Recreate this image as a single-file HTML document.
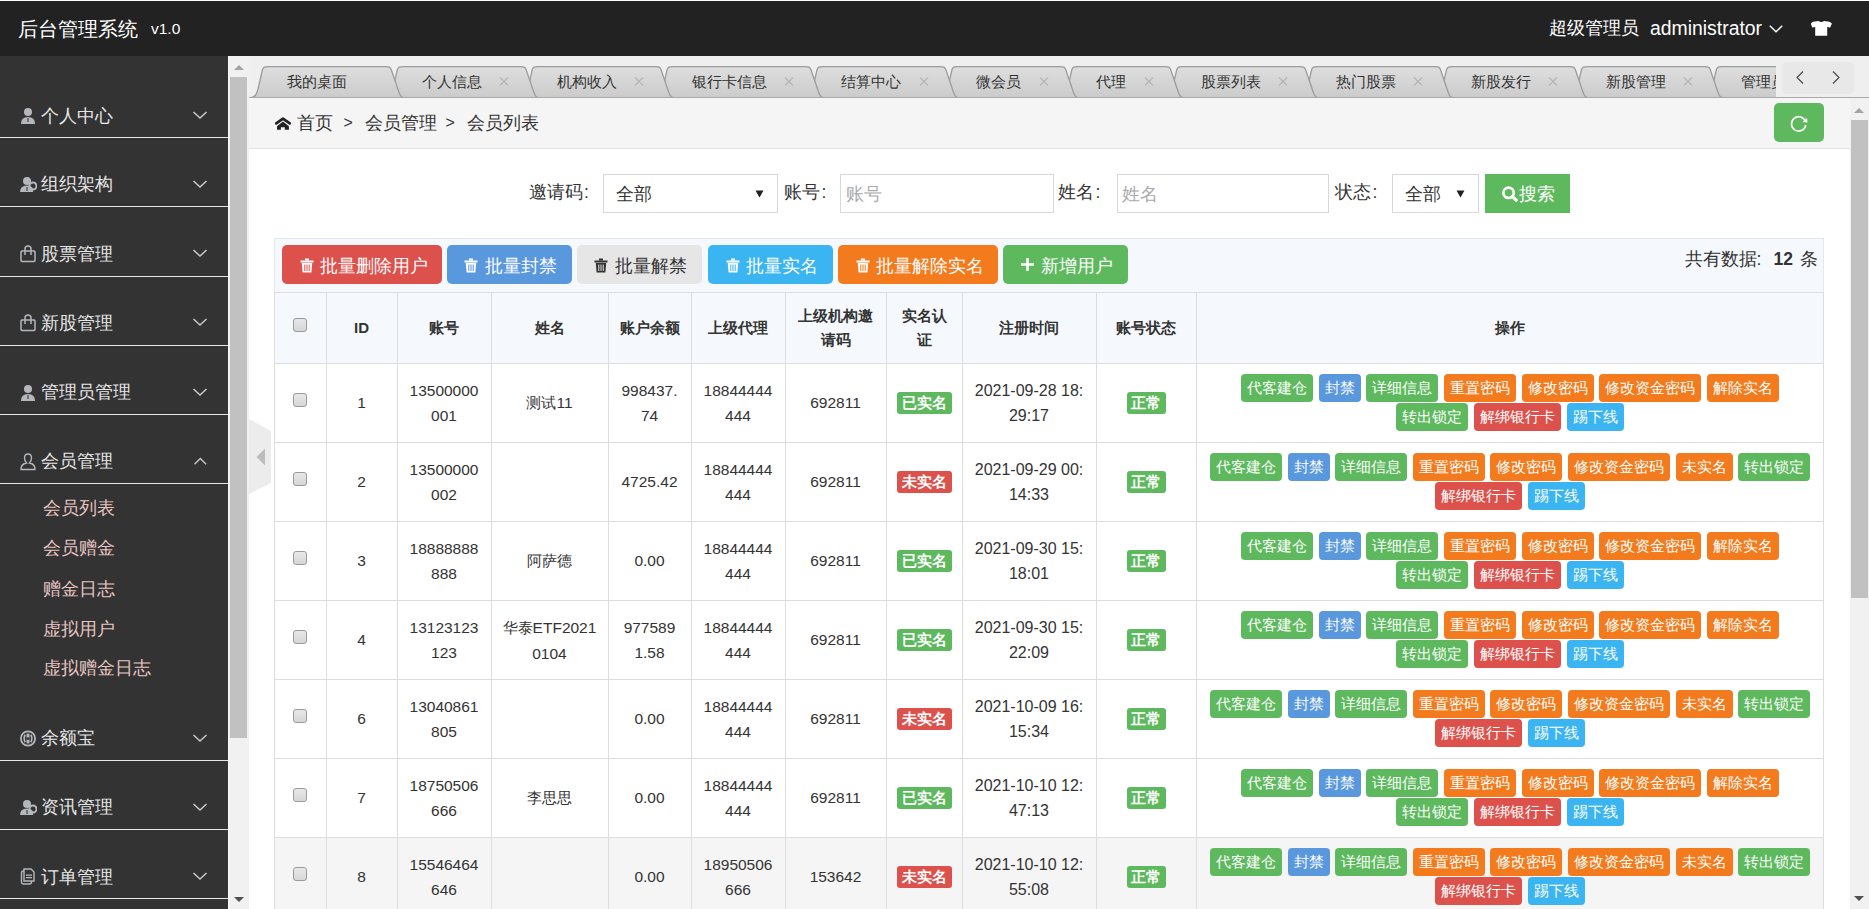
<!DOCTYPE html>
<html><head><meta charset="utf-8"><title>会员列表</title>
<style>
html,body{margin:0;padding:0;width:1869px;height:909px;overflow:hidden;background:#fff;font-family:"Liberation Sans", sans-serif;}
</style></head><body>
<div style="position:absolute;left:0px;top:0px;width:1869px;height:1px;background:#ffffff"></div>
<div style="position:absolute;left:0px;top:1px;width:1869px;height:55px;background:#222"></div>
<div style="position:absolute;left:18px;top:17.00px;font-size:20px;line-height:24px;color:#fff;font-weight:normal;text-align:left;white-space:nowrap;">后台管理系统</div>
<div style="position:absolute;left:151px;top:19.25px;font-size:15.5px;line-height:19.5px;color:#fff;font-weight:normal;text-align:left;white-space:nowrap;">v1.0</div>
<div style="position:absolute;left:1549px;top:17.75px;font-size:17.5px;line-height:21.5px;color:#fff;font-weight:normal;text-align:left;white-space:nowrap;">超级管理员</div>
<div style="position:absolute;left:1650px;top:16.80px;font-size:19.4px;line-height:23.4px;color:#fff;font-weight:normal;text-align:left;white-space:nowrap;">administrator</div>
<svg style="position:absolute;left:1768px;top:23px" width="16" height="12" viewBox="0 0 16 12"><polyline points="1.8,2.8 8,8.8 14.2,2.8" fill="none" stroke="#fff" stroke-width="1.5"/></svg>
<svg style="position:absolute;left:1810px;top:20px" width="23" height="17" viewBox="0 0 23 17"><path d="M8.5,1 L3,1.8 L0.8,3.5 L2.2,7.6 L5.2,7 L5.2,15.8 L17.2,15.8 L17.2,7 L20.2,7.6 L21.9,3.5 L19.5,1.8 L14,1 Q11.3,3.2 8.5,1 Z" fill="#fff"/></svg>
<div style="position:absolute;left:0px;top:56px;width:228px;height:853px;background:#333"></div>
<svg style="position:absolute;left:20px;top:107.0px" width="17" height="18" viewBox="0 0 17 18"><circle cx="8" cy="5" r="4" fill="#b4b8bc"/><path d="M1,17 Q1,10 8,10 Q15,10 15,17 Z" fill="#b4b8bc"/><rect x="7.3" y="11" width="1.4" height="4" fill="#555"/></svg>
<div style="position:absolute;left:41px;top:104.50px;font-size:18px;line-height:22px;color:#e6e6e6;font-weight:normal;text-align:left;white-space:nowrap;">个人中心</div>
<svg style="position:absolute;left:192px;top:110.0px" width="16" height="10" viewBox="0 0 16 10"><polyline points="1.5,2 8,8 14.5,2" fill="none" stroke="#c8c8c8" stroke-width="1.6"/></svg>
<div style="position:absolute;left:0px;top:137px;width:228px;height:1px;background:#e8e8e8"></div>
<svg style="position:absolute;left:20px;top:175.5px" width="17" height="18" viewBox="0 0 17 18"><circle cx="7" cy="5" r="4" fill="#b4b8bc"/><path d="M0,16 Q0,9.5 7,9.5 Q12,9.5 13,13 L13,16 Z" fill="#b4b8bc"/><circle cx="13" cy="10" r="3.5" fill="none" stroke="#b4b8bc" stroke-width="2"/><rect x="6.3" y="11" width="1.4" height="4" fill="#555"/></svg>
<div style="position:absolute;left:41px;top:173.00px;font-size:18px;line-height:22px;color:#e6e6e6;font-weight:normal;text-align:left;white-space:nowrap;">组织架构</div>
<svg style="position:absolute;left:192px;top:178.5px" width="16" height="10" viewBox="0 0 16 10"><polyline points="1.5,2 8,8 14.5,2" fill="none" stroke="#c8c8c8" stroke-width="1.6"/></svg>
<div style="position:absolute;left:0px;top:206px;width:228px;height:1px;background:#e8e8e8"></div>
<svg style="position:absolute;left:20px;top:245.0px" width="17" height="18" viewBox="0 0 17 18"><rect x="1" y="6" width="14" height="10.5" rx="1" fill="none" stroke="#b4b8bc" stroke-width="1.5"/><path d="M5,10 L5,4 Q5,1 8,1 Q11,1 11,4 L11,10" fill="none" stroke="#b4b8bc" stroke-width="1.5"/></svg>
<div style="position:absolute;left:41px;top:242.50px;font-size:18px;line-height:22px;color:#e6e6e6;font-weight:normal;text-align:left;white-space:nowrap;">股票管理</div>
<svg style="position:absolute;left:192px;top:248.0px" width="16" height="10" viewBox="0 0 16 10"><polyline points="1.5,2 8,8 14.5,2" fill="none" stroke="#c8c8c8" stroke-width="1.6"/></svg>
<div style="position:absolute;left:0px;top:276px;width:228px;height:1px;background:#e8e8e8"></div>
<svg style="position:absolute;left:20px;top:314.0px" width="17" height="18" viewBox="0 0 17 18"><rect x="1" y="6" width="14" height="10.5" rx="1" fill="none" stroke="#b4b8bc" stroke-width="1.5"/><path d="M5,10 L5,4 Q5,1 8,1 Q11,1 11,4 L11,10" fill="none" stroke="#b4b8bc" stroke-width="1.5"/></svg>
<div style="position:absolute;left:41px;top:311.50px;font-size:18px;line-height:22px;color:#e6e6e6;font-weight:normal;text-align:left;white-space:nowrap;">新股管理</div>
<svg style="position:absolute;left:192px;top:317.0px" width="16" height="10" viewBox="0 0 16 10"><polyline points="1.5,2 8,8 14.5,2" fill="none" stroke="#c8c8c8" stroke-width="1.6"/></svg>
<div style="position:absolute;left:0px;top:345px;width:228px;height:1px;background:#e8e8e8"></div>
<svg style="position:absolute;left:20px;top:383.5px" width="17" height="18" viewBox="0 0 17 18"><circle cx="8" cy="5" r="4" fill="#b4b8bc"/><path d="M1,17 Q1,10 8,10 Q15,10 15,17 Z" fill="#b4b8bc"/><rect x="7.3" y="11" width="1.4" height="4" fill="#555"/></svg>
<div style="position:absolute;left:41px;top:381.00px;font-size:18px;line-height:22px;color:#e6e6e6;font-weight:normal;text-align:left;white-space:nowrap;">管理员管理</div>
<svg style="position:absolute;left:192px;top:386.5px" width="16" height="10" viewBox="0 0 16 10"><polyline points="1.5,2 8,8 14.5,2" fill="none" stroke="#c8c8c8" stroke-width="1.6"/></svg>
<div style="position:absolute;left:0px;top:414px;width:228px;height:1px;background:#e8e8e8"></div>
<svg style="position:absolute;left:20px;top:452.5px" width="17" height="18" viewBox="0 0 17 18"><path d="M8,1 Q11.5,1 11.5,5 Q11.5,8 9.5,10 Q15,11 15,16.5 L1,16.5 Q1,11 6.5,10 Q4.5,8 4.5,5 Q4.5,1 8,1 Z" fill="none" stroke="#b4b8bc" stroke-width="1.4"/></svg>
<div style="position:absolute;left:41px;top:450.00px;font-size:18px;line-height:22px;color:#e6e6e6;font-weight:normal;text-align:left;white-space:nowrap;">会员管理</div>
<svg style="position:absolute;left:192px;top:455.5px" width="16" height="10" viewBox="0 0 16 10"><polyline points="2.5,8.3 8.3,2.5 14.1,8.3" fill="none" stroke="#c8c8c8" stroke-width="1.4"/></svg>
<div style="position:absolute;left:0px;top:483px;width:228px;height:1px;background:#e8e8e8"></div>
<svg style="position:absolute;left:20px;top:729.5px" width="17" height="18" viewBox="0 0 17 18"><circle cx="8" cy="8.5" r="7.1" fill="none" stroke="#b4b8bc" stroke-width="1.8"/><path d="M5.2,4.8 Q3,8.5 5.2,12.2 M10.8,4.8 Q13,8.5 10.8,12.2" fill="none" stroke="#b4b8bc" stroke-width="1.7"/><rect x="6.5" y="3.6" width="3" height="9.8" fill="#b4b8bc"/><rect x="6.5" y="7.4" width="3" height="2.4" fill="#333"/></svg>
<div style="position:absolute;left:41px;top:727.00px;font-size:18px;line-height:22px;color:#e6e6e6;font-weight:normal;text-align:left;white-space:nowrap;">余额宝</div>
<svg style="position:absolute;left:192px;top:732.5px" width="16" height="10" viewBox="0 0 16 10"><polyline points="1.5,2 8,8 14.5,2" fill="none" stroke="#c8c8c8" stroke-width="1.6"/></svg>
<div style="position:absolute;left:0px;top:760px;width:228px;height:1px;background:#e8e8e8"></div>
<svg style="position:absolute;left:20px;top:798.5px" width="17" height="18" viewBox="0 0 17 18"><circle cx="7" cy="5" r="4" fill="#b4b8bc"/><path d="M0,16 Q0,9.5 7,9.5 Q12,9.5 13,13 L13,16 Z" fill="#b4b8bc"/><circle cx="13" cy="10" r="3.5" fill="none" stroke="#b4b8bc" stroke-width="2"/><rect x="6.3" y="11" width="1.4" height="4" fill="#555"/></svg>
<div style="position:absolute;left:41px;top:796.00px;font-size:18px;line-height:22px;color:#e6e6e6;font-weight:normal;text-align:left;white-space:nowrap;">资讯管理</div>
<svg style="position:absolute;left:192px;top:801.5px" width="16" height="10" viewBox="0 0 16 10"><polyline points="1.5,2 8,8 14.5,2" fill="none" stroke="#c8c8c8" stroke-width="1.6"/></svg>
<div style="position:absolute;left:0px;top:829px;width:228px;height:1px;background:#e8e8e8"></div>
<svg style="position:absolute;left:20px;top:868.0px" width="17" height="18" viewBox="0 0 17 18"><rect x="1.5" y="3" width="10" height="13" rx="2" fill="none" stroke="#b4b8bc" stroke-width="1.4"/><path d="M4,1 L11,1 L14,4 L14,13 L4,13 Z" fill="#333" stroke="#b4b8bc" stroke-width="1.4"/><rect x="6" y="6.5" width="6" height="1.3" fill="#b4b8bc"/><rect x="6" y="9" width="6" height="1.3" fill="#b4b8bc"/></svg>
<div style="position:absolute;left:41px;top:865.50px;font-size:18px;line-height:22px;color:#e6e6e6;font-weight:normal;text-align:left;white-space:nowrap;">订单管理</div>
<svg style="position:absolute;left:192px;top:871.0px" width="16" height="10" viewBox="0 0 16 10"><polyline points="1.5,2 8,8 14.5,2" fill="none" stroke="#c8c8c8" stroke-width="1.6"/></svg>
<div style="position:absolute;left:0px;top:898px;width:228px;height:1px;background:#e8e8e8"></div>
<div style="position:absolute;left:42.5px;top:498.25px;font-size:17.5px;line-height:21.5px;color:#e6c4c2;font-weight:normal;text-align:left;white-space:nowrap;">会员列表</div>
<div style="position:absolute;left:42.5px;top:538.25px;font-size:17.5px;line-height:21.5px;color:#e6c4c2;font-weight:normal;text-align:left;white-space:nowrap;">会员赠金</div>
<div style="position:absolute;left:42.5px;top:578.75px;font-size:17.5px;line-height:21.5px;color:#e6c4c2;font-weight:normal;text-align:left;white-space:nowrap;">赠金日志</div>
<div style="position:absolute;left:42.5px;top:618.75px;font-size:17.5px;line-height:21.5px;color:#e6c4c2;font-weight:normal;text-align:left;white-space:nowrap;">虚拟用户</div>
<div style="position:absolute;left:42.5px;top:658.25px;font-size:17.5px;line-height:21.5px;color:#e6c4c2;font-weight:normal;text-align:left;white-space:nowrap;">虚拟赠金日志</div>
<div style="position:absolute;left:228px;top:56px;width:21px;height:853px;background:#f1f1f1;border-left:1px solid #fafafa;box-sizing:border-box"></div>
<div style="position:absolute;left:230px;top:77px;width:17px;height:661px;background:#c1c1c1"></div>
<svg style="position:absolute;left:232px;top:63px" width="14" height="8" viewBox="0 0 14 8"><polygon points="2,7 7,2 12,7" fill="#a3a3a3"/></svg>
<svg style="position:absolute;left:232px;top:896px" width="14" height="8" viewBox="0 0 14 8"><polygon points="2,1 7,6 12,1" fill="#505050"/></svg>
<div style="position:absolute;left:249px;top:56px;width:1620px;height:42px;background:#efefef"></div>
<div style="position:absolute;left:249px;top:56px;width:1527px;height:42px;overflow:hidden">
<svg style="position:absolute;left:0;top:0" width="1527" height="42" viewBox="0 0 1527 42"><defs><linearGradient id="tg" x1="0" y1="0" x2="0" y2="1"><stop offset="0" stop-color="#dedede"/><stop offset="1" stop-color="#cbcbcb"/></linearGradient></defs><path d="M1454.9,42 C1460.9,41 1461.4,38 1462.9,33 L1467.4,13.5 C1468.4,11 1469.4,10.6 1473.4,10.6 L1605.1,10.6 C1609.1,10.6 1610.1,11 1611.1,13.5 L1619.1,37 C1620.1,40 1621.1,41.5 1624.1,42 Z" fill="url(#tg)" stroke="#9c9c9c" stroke-width="1.3"/><path d="M1320.0,42 C1326.0,41 1326.5,38 1328.0,33 L1332.5,13.5 C1333.5,11 1334.5,10.6 1338.5,10.6 L1455.2,10.6 C1459.2,10.6 1460.2,11 1461.2,13.5 L1469.2,37 C1470.2,40 1471.2,41.5 1474.2,42 Z" fill="url(#tg)" stroke="#9c9c9c" stroke-width="1.3"/><path d="M1185.1,42 C1191.1,41 1191.6,38 1193.1,33 L1197.6,13.5 C1198.6,11 1199.6,10.6 1203.6,10.6 L1320.3,10.6 C1324.3,10.6 1325.3,11 1326.3,13.5 L1334.3,37 C1335.3,40 1336.3,41.5 1339.3,42 Z" fill="url(#tg)" stroke="#9c9c9c" stroke-width="1.3"/><path d="M1050.2,42 C1056.2,41 1056.7,38 1058.2,33 L1062.7,13.5 C1063.7,11 1064.7,10.6 1068.7,10.6 L1185.4,10.6 C1189.4,10.6 1190.4,11 1191.4,13.5 L1199.4,37 C1200.4,40 1201.4,41.5 1204.4,42 Z" fill="url(#tg)" stroke="#9c9c9c" stroke-width="1.3"/><path d="M915.3,42 C921.3,41 921.8,38 923.3,33 L927.8,13.5 C928.8,11 929.8,10.6 933.8,10.6 L1050.5,10.6 C1054.5,10.6 1055.5,11 1056.5,13.5 L1064.5,37 C1065.5,40 1066.5,41.5 1069.5,42 Z" fill="url(#tg)" stroke="#9c9c9c" stroke-width="1.3"/><path d="M810.4,42 C816.4,41 816.9,38 818.4,33 L822.9,13.5 C823.9,11 824.9,10.6 828.9,10.6 L915.6,10.6 C919.6,10.6 920.6,11 921.6,13.5 L929.6,37 C930.6,40 931.6,41.5 934.6,42 Z" fill="url(#tg)" stroke="#9c9c9c" stroke-width="1.3"/><path d="M690.5,42 C696.5,41 697.0,38 698.5,33 L703.0,13.5 C704.0,11 705.0,10.6 709.0,10.6 L810.7,10.6 C814.7,10.6 815.7,11 816.7,13.5 L824.7,37 C825.7,40 826.7,41.5 829.7,42 Z" fill="url(#tg)" stroke="#9c9c9c" stroke-width="1.3"/><path d="M555.6,42 C561.6,41 562.1,38 563.6,33 L568.1,13.5 C569.1,11 570.1,10.6 574.1,10.6 L690.8,10.6 C694.8,10.6 695.8,11 696.8,13.5 L704.8,37 C705.8,40 706.8,41.5 709.8,42 Z" fill="url(#tg)" stroke="#9c9c9c" stroke-width="1.3"/><path d="M405.7,42 C411.7,41 412.2,38 413.7,33 L418.2,13.5 C419.2,11 420.2,10.6 424.2,10.6 L555.9,10.6 C559.9,10.6 560.9,11 561.9,13.5 L569.9,37 C570.9,40 571.9,41.5 574.9,42 Z" fill="url(#tg)" stroke="#9c9c9c" stroke-width="1.3"/><path d="M270.8,42 C276.8,41 277.3,38 278.8,33 L283.3,13.5 C284.3,11 285.3,10.6 289.3,10.6 L406.0,10.6 C410.0,10.6 411.0,11 412.0,13.5 L420.0,37 C421.0,40 422.0,41.5 425.0,42 Z" fill="url(#tg)" stroke="#9c9c9c" stroke-width="1.3"/><path d="M135.9,42 C141.9,41 142.4,38 143.9,33 L148.4,13.5 C149.4,11 150.4,10.6 154.4,10.6 L271.1,10.6 C275.1,10.6 276.1,11 277.1,13.5 L285.1,37 C286.1,40 287.1,41.5 290.1,42 Z" fill="url(#tg)" stroke="#9c9c9c" stroke-width="1.3"/><path d="M1.0,42 C7.0,41 7.5,38 9.0,33 L13.5,13.5 C14.5,11 15.5,10.6 19.5,10.6 L136.2,10.6 C140.2,10.6 141.2,11 142.2,13.5 L150.2,37 C151.2,40 152.2,41.5 155.2,42 Z" fill="url(#tg)" stroke="#9c9c9c" stroke-width="1.3"/></svg>
<div style="position:absolute;left:37.8px;top:16px;font-size:15px;line-height:20px;color:#333;white-space:nowrap">我的桌面</div>
<div style="position:absolute;left:172.7px;top:16px;font-size:15px;line-height:20px;color:#333;white-space:nowrap">个人信息</div>
<div style="position:absolute;left:250.0px;top:16px;width:10px;height:20px"><svg width="10" height="20" viewBox="0 0 10 20"><path d="M1,5.5 L9,13.5 M9,5.5 L1,13.5" stroke="#b5b5b5" stroke-width="1.1"/></svg></div>
<div style="position:absolute;left:307.6px;top:16px;font-size:15px;line-height:20px;color:#333;white-space:nowrap">机构收入</div>
<div style="position:absolute;left:384.9px;top:16px;width:10px;height:20px"><svg width="10" height="20" viewBox="0 0 10 20"><path d="M1,5.5 L9,13.5 M9,5.5 L1,13.5" stroke="#b5b5b5" stroke-width="1.1"/></svg></div>
<div style="position:absolute;left:442.5px;top:16px;font-size:15px;line-height:20px;color:#333;white-space:nowrap">银行卡信息</div>
<div style="position:absolute;left:534.8px;top:16px;width:10px;height:20px"><svg width="10" height="20" viewBox="0 0 10 20"><path d="M1,5.5 L9,13.5 M9,5.5 L1,13.5" stroke="#b5b5b5" stroke-width="1.1"/></svg></div>
<div style="position:absolute;left:592.4px;top:16px;font-size:15px;line-height:20px;color:#333;white-space:nowrap">结算中心</div>
<div style="position:absolute;left:669.7px;top:16px;width:10px;height:20px"><svg width="10" height="20" viewBox="0 0 10 20"><path d="M1,5.5 L9,13.5 M9,5.5 L1,13.5" stroke="#b5b5b5" stroke-width="1.1"/></svg></div>
<div style="position:absolute;left:727.3px;top:16px;font-size:15px;line-height:20px;color:#333;white-space:nowrap">微会员</div>
<div style="position:absolute;left:789.6px;top:16px;width:10px;height:20px"><svg width="10" height="20" viewBox="0 0 10 20"><path d="M1,5.5 L9,13.5 M9,5.5 L1,13.5" stroke="#b5b5b5" stroke-width="1.1"/></svg></div>
<div style="position:absolute;left:847.2px;top:16px;font-size:15px;line-height:20px;color:#333;white-space:nowrap">代理</div>
<div style="position:absolute;left:894.5px;top:16px;width:10px;height:20px"><svg width="10" height="20" viewBox="0 0 10 20"><path d="M1,5.5 L9,13.5 M9,5.5 L1,13.5" stroke="#b5b5b5" stroke-width="1.1"/></svg></div>
<div style="position:absolute;left:952.1px;top:16px;font-size:15px;line-height:20px;color:#333;white-space:nowrap">股票列表</div>
<div style="position:absolute;left:1029.4px;top:16px;width:10px;height:20px"><svg width="10" height="20" viewBox="0 0 10 20"><path d="M1,5.5 L9,13.5 M9,5.5 L1,13.5" stroke="#b5b5b5" stroke-width="1.1"/></svg></div>
<div style="position:absolute;left:1087.0px;top:16px;font-size:15px;line-height:20px;color:#333;white-space:nowrap">热门股票</div>
<div style="position:absolute;left:1164.3px;top:16px;width:10px;height:20px"><svg width="10" height="20" viewBox="0 0 10 20"><path d="M1,5.5 L9,13.5 M9,5.5 L1,13.5" stroke="#b5b5b5" stroke-width="1.1"/></svg></div>
<div style="position:absolute;left:1221.9px;top:16px;font-size:15px;line-height:20px;color:#333;white-space:nowrap">新股发行</div>
<div style="position:absolute;left:1299.2px;top:16px;width:10px;height:20px"><svg width="10" height="20" viewBox="0 0 10 20"><path d="M1,5.5 L9,13.5 M9,5.5 L1,13.5" stroke="#b5b5b5" stroke-width="1.1"/></svg></div>
<div style="position:absolute;left:1356.8px;top:16px;font-size:15px;line-height:20px;color:#333;white-space:nowrap">新股管理</div>
<div style="position:absolute;left:1434.1px;top:16px;width:10px;height:20px"><svg width="10" height="20" viewBox="0 0 10 20"><path d="M1,5.5 L9,13.5 M9,5.5 L1,13.5" stroke="#b5b5b5" stroke-width="1.1"/></svg></div>
<div style="position:absolute;left:1491.7px;top:16px;font-size:15px;line-height:20px;color:#333;white-space:nowrap">管理员管理</div>
<div style="position:absolute;left:1584.0px;top:16px;width:10px;height:20px"><svg width="10" height="20" viewBox="0 0 10 20"><path d="M1,5.5 L9,13.5 M9,5.5 L1,13.5" stroke="#b5b5b5" stroke-width="1.1"/></svg></div>
</div>
<div style="position:absolute;left:249px;top:97px;width:1620px;height:1px;background:#a9a9a9"></div>
<div style="position:absolute;left:249px;top:98px;width:1620px;height:1px;background:#a2a2a2"></div>
<div style="position:absolute;left:1782px;top:62px;width:72px;height:32px;background:#e8e8e8;border-radius:5px"></div>
<svg style="position:absolute;left:1794px;top:70px" width="12" height="15" viewBox="0 0 12 15"><polyline points="9,1.5 3,7.5 9,13.5" fill="none" stroke="#444" stroke-width="1.1"/></svg>
<svg style="position:absolute;left:1830px;top:70px" width="12" height="15" viewBox="0 0 12 15"><polyline points="3,1.5 9,7.5 3,13.5" fill="none" stroke="#444" stroke-width="1.1"/></svg>
<div style="position:absolute;left:249px;top:98px;width:1601px;height:811px;background:#fff"></div>
<div style="position:absolute;left:249px;top:98px;width:1601px;height:50px;background:#f5f5f5;border-bottom:1px solid #e2e2e2"></div>
<svg style="position:absolute;left:274px;top:115px" width="18" height="16" viewBox="0 0 18 16"><polyline points="2.3,8.4 9,3.6 15.7,8.4" fill="none" stroke="#222" stroke-width="2.7" stroke-linecap="round" stroke-linejoin="round"/><path d="M9,6.6 L3,11.3 L3,14.7 L6.9,14.7 L6.9,12.2 L10.8,12.2 L10.8,14.7 L14.9,14.7 L14.9,11.3 Z" fill="#222"/></svg>
<div style="position:absolute;left:297px;top:112.75px;font-size:17.5px;line-height:21.5px;color:#333;font-weight:normal;text-align:left;white-space:nowrap;">首页</div>
<div style="position:absolute;left:343.5px;top:112.50px;font-size:16px;line-height:20px;color:#333;font-weight:normal;text-align:left;white-space:nowrap;">&gt;</div>
<div style="position:absolute;left:365px;top:112.75px;font-size:17.5px;line-height:21.5px;color:#333;font-weight:normal;text-align:left;white-space:nowrap;">会员管理</div>
<div style="position:absolute;left:445.5px;top:112.50px;font-size:16px;line-height:20px;color:#333;font-weight:normal;text-align:left;white-space:nowrap;">&gt;</div>
<div style="position:absolute;left:467px;top:112.75px;font-size:17.5px;line-height:21.5px;color:#333;font-weight:normal;text-align:left;white-space:nowrap;">会员列表</div>
<div style="position:absolute;left:1774px;top:103px;width:50px;height:39px;background:#5eb95e;border-radius:5px"></div>
<svg style="position:absolute;left:1788px;top:112px" width="22" height="22" viewBox="0 0 22 22"><path d="M17.5,9.5 A7.2,7.2 0 1 0 17.8,13" fill="none" stroke="#fff" stroke-width="1.6"/><polygon points="14.5,10 19.5,10.5 19,6" fill="#fff"/></svg>
<div style="position:absolute;left:1850px;top:98px;width:19px;height:811px;background:#f1f1f1"></div>
<div style="position:absolute;left:1851px;top:120px;width:17px;height:478px;background:#c1c1c1"></div>
<svg style="position:absolute;left:1852px;top:106px" width="14" height="8" viewBox="0 0 14 8"><polygon points="2,7 7,2 12,7" fill="#a3a3a3"/></svg>
<svg style="position:absolute;left:1852px;top:895px" width="14" height="8" viewBox="0 0 14 8"><polygon points="2,1 7,6 12,1" fill="#505050"/></svg>
<svg style="position:absolute;left:249px;top:418px" width="24" height="78" viewBox="0 0 24 78"><path d="M0,1 L22,13 L22,65 L0,76 Z" fill="#ececec"/><polygon points="16,30.5 7.5,39 16,47.5" fill="#bdbdbd"/></svg>
<div style="position:absolute;left:528.5px;top:182.25px;font-size:17.5px;line-height:21.5px;color:#333;font-weight:normal;text-align:left;white-space:nowrap;">邀请码<span style="margin-left:1.5px">:</span></div>
<div style="position:absolute;left:603px;top:174px;width:175px;height:39px;border:1px solid #d8d8d8;box-sizing:border-box;background:#fff"></div>
<div style="position:absolute;left:616px;top:184.25px;font-size:17.5px;line-height:21.5px;color:#333;font-weight:normal;text-align:left;white-space:nowrap;">全部</div>
<svg style="position:absolute;left:755px;top:190px" width="9" height="8" viewBox="0 0 9 8"><polygon points="0.5,0.5 8.5,0.5 4.5,7.5" fill="#222"/></svg>
<div style="position:absolute;left:784px;top:182.25px;font-size:17.5px;line-height:21.5px;color:#333;font-weight:normal;text-align:left;white-space:nowrap;">账号<span style="margin-left:1.5px">:</span></div>
<div style="position:absolute;left:840px;top:174px;width:214px;height:39px;border:1px solid #d8d8d8;box-sizing:border-box;background:#fff"></div>
<div style="position:absolute;left:846px;top:184.25px;font-size:17.5px;line-height:21.5px;color:#aaa;font-weight:normal;text-align:left;white-space:nowrap;">账号</div>
<div style="position:absolute;left:1058px;top:182.25px;font-size:17.5px;line-height:21.5px;color:#333;font-weight:normal;text-align:left;white-space:nowrap;">姓名<span style="margin-left:1.5px">:</span></div>
<div style="position:absolute;left:1117px;top:174px;width:212px;height:39px;border:1px solid #d8d8d8;box-sizing:border-box;background:#fff"></div>
<div style="position:absolute;left:1122px;top:184.25px;font-size:17.5px;line-height:21.5px;color:#aaa;font-weight:normal;text-align:left;white-space:nowrap;">姓名</div>
<div style="position:absolute;left:1335px;top:182.25px;font-size:17.5px;line-height:21.5px;color:#333;font-weight:normal;text-align:left;white-space:nowrap;">状态<span style="margin-left:1.5px">:</span></div>
<div style="position:absolute;left:1392px;top:174px;width:87px;height:39px;border:1px solid #d8d8d8;box-sizing:border-box;background:#fff"></div>
<div style="position:absolute;left:1405px;top:184.25px;font-size:17.5px;line-height:21.5px;color:#333;font-weight:normal;text-align:left;white-space:nowrap;">全部</div>
<svg style="position:absolute;left:1456px;top:190px" width="9" height="8" viewBox="0 0 9 8"><polygon points="0.5,0.5 8.5,0.5 4.5,7.5" fill="#222"/></svg>
<div style="position:absolute;left:1485px;top:174px;width:85px;height:39px;background:#5eb95e"></div>
<svg style="position:absolute;left:1501px;top:185px" width="18" height="18" viewBox="0 0 18 18"><circle cx="7.6" cy="7.8" r="5.2" fill="none" stroke="#fff" stroke-width="2.7"/><path d="M11.2,11.4 L15.2,15.2" stroke="#fff" stroke-width="3.2" stroke-linecap="round"/></svg>
<div style="position:absolute;left:1518.5px;top:183.20px;font-size:18px;line-height:22px;color:#fff;font-weight:normal;text-align:left;white-space:nowrap;">搜索</div>
<div style="position:absolute;left:274px;top:238px;width:1550px;height:55px;background:#f5f9fd;border:1px solid #e3e8ee;box-sizing:border-box"></div>
<div style="position:absolute;left:282px;top:245px;width:160px;height:39px;background:#dd514c;border-radius:5px"></div>
<svg style="position:absolute;left:300px;top:258px" width="14" height="15" viewBox="0 0 14 15"><rect x="0.5" y="2.5" width="13" height="2" fill="#fff"/><rect x="5" y="0.5" width="4" height="2" fill="#fff"/><path d="M1.8,5 L2.6,14.5 L11.4,14.5 L12.2,5 Z" fill="#fff"/><rect x="4.3" y="6.5" width="1" height="6.5" fill="#dd514c"/><rect x="6.5" y="6.5" width="1" height="6.5" fill="#dd514c"/><rect x="8.7" y="6.5" width="1" height="6.5" fill="#dd514c"/></svg>
<div style="position:absolute;left:320.0px;top:255.75px;font-size:17.5px;line-height:21.5px;color:#fff;font-weight:normal;text-align:left;white-space:nowrap;">批量删除用户</div>
<div style="position:absolute;left:447px;top:245px;width:125px;height:39px;background:#5a98de;border-radius:5px"></div>
<svg style="position:absolute;left:464px;top:258px" width="14" height="15" viewBox="0 0 14 15"><rect x="0.5" y="2.5" width="13" height="2" fill="#fff"/><rect x="5" y="0.5" width="4" height="2" fill="#fff"/><path d="M1.8,5 L2.6,14.5 L11.4,14.5 L12.2,5 Z" fill="#fff"/><rect x="4.3" y="6.5" width="1" height="6.5" fill="#5a98de"/><rect x="6.5" y="6.5" width="1" height="6.5" fill="#5a98de"/><rect x="8.7" y="6.5" width="1" height="6.5" fill="#5a98de"/></svg>
<div style="position:absolute;left:485.0px;top:255.75px;font-size:17.5px;line-height:21.5px;color:#fff;font-weight:normal;text-align:left;white-space:nowrap;">批量封禁</div>
<div style="position:absolute;left:577px;top:245px;width:125px;height:39px;background:#e6e6e6;border-radius:5px"></div>
<svg style="position:absolute;left:594px;top:258px" width="14" height="15" viewBox="0 0 14 15"><rect x="0.5" y="2.5" width="13" height="2" fill="#333"/><rect x="5" y="0.5" width="4" height="2" fill="#333"/><path d="M1.8,5 L2.6,14.5 L11.4,14.5 L12.2,5 Z" fill="#333"/><rect x="4.3" y="6.5" width="1" height="6.5" fill="#e6e6e6"/><rect x="6.5" y="6.5" width="1" height="6.5" fill="#e6e6e6"/><rect x="8.7" y="6.5" width="1" height="6.5" fill="#e6e6e6"/></svg>
<div style="position:absolute;left:615.0px;top:255.75px;font-size:17.5px;line-height:21.5px;color:#333;font-weight:normal;text-align:left;white-space:nowrap;">批量解禁</div>
<div style="position:absolute;left:708px;top:245px;width:125px;height:39px;background:#3bb4f2;border-radius:5px"></div>
<svg style="position:absolute;left:726px;top:258px" width="14" height="15" viewBox="0 0 14 15"><rect x="0.5" y="2.5" width="13" height="2" fill="#fff"/><rect x="5" y="0.5" width="4" height="2" fill="#fff"/><path d="M1.8,5 L2.6,14.5 L11.4,14.5 L12.2,5 Z" fill="#fff"/><rect x="4.3" y="6.5" width="1" height="6.5" fill="#3bb4f2"/><rect x="6.5" y="6.5" width="1" height="6.5" fill="#3bb4f2"/><rect x="8.7" y="6.5" width="1" height="6.5" fill="#3bb4f2"/></svg>
<div style="position:absolute;left:746.0px;top:255.75px;font-size:17.5px;line-height:21.5px;color:#fff;font-weight:normal;text-align:left;white-space:nowrap;">批量实名</div>
<div style="position:absolute;left:838px;top:245px;width:160px;height:39px;background:#f37b1d;border-radius:5px"></div>
<svg style="position:absolute;left:856px;top:258px" width="14" height="15" viewBox="0 0 14 15"><rect x="0.5" y="2.5" width="13" height="2" fill="#fff"/><rect x="5" y="0.5" width="4" height="2" fill="#fff"/><path d="M1.8,5 L2.6,14.5 L11.4,14.5 L12.2,5 Z" fill="#fff"/><rect x="4.3" y="6.5" width="1" height="6.5" fill="#f37b1d"/><rect x="6.5" y="6.5" width="1" height="6.5" fill="#f37b1d"/><rect x="8.7" y="6.5" width="1" height="6.5" fill="#f37b1d"/></svg>
<div style="position:absolute;left:876.0px;top:255.75px;font-size:17.5px;line-height:21.5px;color:#fff;font-weight:normal;text-align:left;white-space:nowrap;">批量解除实名</div>
<div style="position:absolute;left:1003px;top:245px;width:125px;height:39px;background:#5eb95e;border-radius:5px"></div>
<svg style="position:absolute;left:1020.0px;top:257px" width="15" height="15" viewBox="0 0 15 15"><path d="M7.5,1 L7.5,14 M1,7.5 L14,7.5" stroke="#fff" stroke-width="2.6"/></svg>
<div style="position:absolute;left:1041.0px;top:255.75px;font-size:17.5px;line-height:21.5px;color:#fff;font-weight:normal;text-align:left;white-space:nowrap;">新增用户</div>
<div style="position:absolute;left:1684.5px;top:248.75px;font-size:17.5px;line-height:21.5px;color:#333;font-weight:normal;text-align:left;white-space:nowrap;">共有数据</div>
<div style="position:absolute;left:1756.5px;top:248.75px;font-size:17.5px;line-height:21.5px;color:#333;font-weight:normal;text-align:left;white-space:nowrap;">:</div>
<div style="position:absolute;left:1773.5px;top:248.75px;font-size:17.5px;line-height:21.5px;color:#333;font-weight:bold;text-align:left;white-space:nowrap;">12</div>
<div style="position:absolute;left:1799.5px;top:248.75px;font-size:17.5px;line-height:21.5px;color:#333;font-weight:normal;text-align:left;white-space:nowrap;">条</div>
<div style="position:absolute;left:274px;top:292px;width:1550px;height:71px;background:#f5f9fd"></div>
<div style="position:absolute;left:275px;top:837px;width:1548px;height:79px;background:#f5f5f5"></div>
<div style="position:absolute;left:274px;top:292px;width:1px;height:627px;background:#dddddd"></div>
<div style="position:absolute;left:326px;top:292px;width:1px;height:627px;background:#dddddd"></div>
<div style="position:absolute;left:397px;top:292px;width:1px;height:627px;background:#dddddd"></div>
<div style="position:absolute;left:491px;top:292px;width:1px;height:627px;background:#dddddd"></div>
<div style="position:absolute;left:608px;top:292px;width:1px;height:627px;background:#dddddd"></div>
<div style="position:absolute;left:691px;top:292px;width:1px;height:627px;background:#dddddd"></div>
<div style="position:absolute;left:785px;top:292px;width:1px;height:627px;background:#dddddd"></div>
<div style="position:absolute;left:886px;top:292px;width:1px;height:627px;background:#dddddd"></div>
<div style="position:absolute;left:962px;top:292px;width:1px;height:627px;background:#dddddd"></div>
<div style="position:absolute;left:1096px;top:292px;width:1px;height:627px;background:#dddddd"></div>
<div style="position:absolute;left:1196px;top:292px;width:1px;height:627px;background:#dddddd"></div>
<div style="position:absolute;left:1823px;top:292px;width:1px;height:627px;background:#dddddd"></div>
<div style="position:absolute;left:274px;top:363px;width:1550px;height:1px;background:#dddddd"></div>
<div style="position:absolute;left:274px;top:442px;width:1550px;height:1px;background:#dddddd"></div>
<div style="position:absolute;left:274px;top:521px;width:1550px;height:1px;background:#dddddd"></div>
<div style="position:absolute;left:274px;top:600px;width:1550px;height:1px;background:#dddddd"></div>
<div style="position:absolute;left:274px;top:679px;width:1550px;height:1px;background:#dddddd"></div>
<div style="position:absolute;left:274px;top:758px;width:1550px;height:1px;background:#dddddd"></div>
<div style="position:absolute;left:274px;top:837px;width:1550px;height:1px;background:#dddddd"></div>
<div style="position:absolute;left:274px;top:916px;width:1550px;height:1px;background:#dddddd"></div>
<div style="position:absolute;left:274px;top:292px;width:1550px;height:1px;background:#dddddd"></div>
<div style="position:absolute;left:326px;top:316.00px;width:71px;font-size:15px;line-height:24px;color:#333;font-weight:bold;text-align:center;white-space:nowrap;">ID</div>
<div style="position:absolute;left:397px;top:316.00px;width:94px;font-size:15px;line-height:24px;color:#333;font-weight:bold;text-align:center;white-space:nowrap;">账号</div>
<div style="position:absolute;left:491px;top:316.00px;width:117px;font-size:15px;line-height:24px;color:#333;font-weight:bold;text-align:center;white-space:nowrap;">姓名</div>
<div style="position:absolute;left:608px;top:316.00px;width:83px;font-size:15px;line-height:24px;color:#333;font-weight:bold;text-align:center;white-space:nowrap;">账户余额</div>
<div style="position:absolute;left:691px;top:316.00px;width:94px;font-size:15px;line-height:24px;color:#333;font-weight:bold;text-align:center;white-space:nowrap;">上级代理</div>
<div style="position:absolute;left:785px;top:304px;width:101px;font-size:15px;line-height:24px;color:#333;font-weight:bold;text-align:center;white-space:nowrap">上级机构邀<br>请码</div>
<div style="position:absolute;left:886px;top:304px;width:76px;font-size:15px;line-height:24px;color:#333;font-weight:bold;text-align:center;white-space:nowrap">实名认<br>证</div>
<div style="position:absolute;left:962px;top:316.00px;width:134px;font-size:15px;line-height:24px;color:#333;font-weight:bold;text-align:center;white-space:nowrap;">注册时间</div>
<div style="position:absolute;left:1096px;top:316.00px;width:100px;font-size:15px;line-height:24px;color:#333;font-weight:bold;text-align:center;white-space:nowrap;">账号状态</div>
<div style="position:absolute;left:1196px;top:316.00px;width:627px;font-size:15px;line-height:24px;color:#333;font-weight:bold;text-align:center;white-space:nowrap;">操作</div>
<div style="position:absolute;left:293px;top:318px;width:14px;height:14px;box-sizing:border-box;border:1px solid #9a9a9a;border-radius:3px;background:linear-gradient(#e8e8e8,#d6d6d6)"></div>
<div style="position:absolute;left:293px;top:393px;width:14px;height:14px;box-sizing:border-box;border:1px solid #9a9a9a;border-radius:3px;background:linear-gradient(#e8e8e8,#d6d6d6)"></div>
<div style="position:absolute;left:326px;top:390.00px;width:71px;font-size:15.5px;line-height:25px;color:#333;font-weight:normal;text-align:center;white-space:nowrap;">1</div>
<div style="position:absolute;left:397px;top:377.5px;width:94px;font-size:15.5px;line-height:25px;color:#333;text-align:center;white-space:nowrap">13500000<br>001</div>
<div style="position:absolute;left:491px;top:390.00px;width:117px;font-size:15.5px;line-height:25px;color:#333;font-weight:normal;text-align:center;white-space:nowrap;"><span style="font-size:14.6px">测试</span>11</div>
<div style="position:absolute;left:608px;top:377.5px;width:83px;font-size:15.5px;line-height:25px;color:#333;text-align:center;white-space:nowrap">998437.<br>74</div>
<div style="position:absolute;left:691px;top:377.5px;width:94px;font-size:15.5px;line-height:25px;color:#333;text-align:center;white-space:nowrap">18844444<br>444</div>
<div style="position:absolute;left:785px;top:390.00px;width:101px;font-size:15.5px;line-height:25px;color:#333;font-weight:normal;text-align:center;white-space:nowrap;">692811</div>
<div style="position:absolute;left:896.5px;top:391.5px;width:55px;height:22px;background:#5eb95e;border-radius:3px;color:#fff;font-size:15px;font-weight:bold;line-height:22px;text-align:center;white-space:nowrap">已实名</div>
<div style="position:absolute;left:962px;top:378.2px;width:134px;font-size:16px;line-height:25px;color:#333;text-align:center;white-space:nowrap">2021-09-28 18:<br>29:17</div>
<div style="position:absolute;left:1126.5px;top:391.5px;width:39px;height:22px;background:#5eb95e;border-radius:3px;color:#fff;font-size:15px;font-weight:bold;line-height:22px;text-align:center;white-space:nowrap">正常</div>
<div style="position:absolute;left:1241.2px;top:374.0px;width:72px;height:28px;background:#5eb95e;border-radius:4px;color:#fff;font-size:15px;line-height:28px;text-align:center;white-space:nowrap">代客建仓</div>
<div style="position:absolute;left:1318.8px;top:374.0px;width:42px;height:28px;background:#5a98de;border-radius:4px;color:#fff;font-size:15px;line-height:28px;text-align:center;white-space:nowrap">封禁</div>
<div style="position:absolute;left:1366.4px;top:374.0px;width:72px;height:28px;background:#5eb95e;border-radius:4px;color:#fff;font-size:15px;line-height:28px;text-align:center;white-space:nowrap">详细信息</div>
<div style="position:absolute;left:1444.0px;top:374.0px;width:72px;height:28px;background:#f37b1d;border-radius:4px;color:#fff;font-size:15px;line-height:28px;text-align:center;white-space:nowrap">重置密码</div>
<div style="position:absolute;left:1521.6px;top:374.0px;width:72px;height:28px;background:#f37b1d;border-radius:4px;color:#fff;font-size:15px;line-height:28px;text-align:center;white-space:nowrap">修改密码</div>
<div style="position:absolute;left:1599.2px;top:374.0px;width:102px;height:28px;background:#f37b1d;border-radius:4px;color:#fff;font-size:15px;line-height:28px;text-align:center;white-space:nowrap">修改资金密码</div>
<div style="position:absolute;left:1706.8px;top:374.0px;width:72px;height:28px;background:#f37b1d;border-radius:4px;color:#fff;font-size:15px;line-height:28px;text-align:center;white-space:nowrap">解除实名</div>
<div style="position:absolute;left:1396.4px;top:402.5px;width:72px;height:28px;background:#5eb95e;border-radius:4px;color:#fff;font-size:15px;line-height:28px;text-align:center;white-space:nowrap">转出锁定</div>
<div style="position:absolute;left:1474.0px;top:402.5px;width:87px;height:28px;background:#dd514c;border-radius:4px;color:#fff;font-size:15px;line-height:28px;text-align:center;white-space:nowrap">解绑银行卡</div>
<div style="position:absolute;left:1566.6px;top:402.5px;width:57px;height:28px;background:#3bb4f2;border-radius:4px;color:#fff;font-size:15px;line-height:28px;text-align:center;white-space:nowrap">踢下线</div>
<div style="position:absolute;left:293px;top:472px;width:14px;height:14px;box-sizing:border-box;border:1px solid #9a9a9a;border-radius:3px;background:linear-gradient(#e8e8e8,#d6d6d6)"></div>
<div style="position:absolute;left:326px;top:469.00px;width:71px;font-size:15.5px;line-height:25px;color:#333;font-weight:normal;text-align:center;white-space:nowrap;">2</div>
<div style="position:absolute;left:397px;top:456.5px;width:94px;font-size:15.5px;line-height:25px;color:#333;text-align:center;white-space:nowrap">13500000<br>002</div>
<div style="position:absolute;left:608px;top:469.00px;width:83px;font-size:15.5px;line-height:25px;color:#333;font-weight:normal;text-align:center;white-space:nowrap;">4725.42</div>
<div style="position:absolute;left:691px;top:456.5px;width:94px;font-size:15.5px;line-height:25px;color:#333;text-align:center;white-space:nowrap">18844444<br>444</div>
<div style="position:absolute;left:785px;top:469.00px;width:101px;font-size:15.5px;line-height:25px;color:#333;font-weight:normal;text-align:center;white-space:nowrap;">692811</div>
<div style="position:absolute;left:896.5px;top:470.5px;width:55px;height:22px;background:#dd514c;border-radius:3px;color:#fff;font-size:15px;font-weight:bold;line-height:22px;text-align:center;white-space:nowrap">未实名</div>
<div style="position:absolute;left:962px;top:457.2px;width:134px;font-size:16px;line-height:25px;color:#333;text-align:center;white-space:nowrap">2021-09-29 00:<br>14:33</div>
<div style="position:absolute;left:1126.5px;top:470.5px;width:39px;height:22px;background:#5eb95e;border-radius:3px;color:#fff;font-size:15px;font-weight:bold;line-height:22px;text-align:center;white-space:nowrap">正常</div>
<div style="position:absolute;left:1209.9px;top:453.0px;width:72px;height:28px;background:#5eb95e;border-radius:4px;color:#fff;font-size:15px;line-height:28px;text-align:center;white-space:nowrap">代客建仓</div>
<div style="position:absolute;left:1287.5px;top:453.0px;width:42px;height:28px;background:#5a98de;border-radius:4px;color:#fff;font-size:15px;line-height:28px;text-align:center;white-space:nowrap">封禁</div>
<div style="position:absolute;left:1335.1px;top:453.0px;width:72px;height:28px;background:#5eb95e;border-radius:4px;color:#fff;font-size:15px;line-height:28px;text-align:center;white-space:nowrap">详细信息</div>
<div style="position:absolute;left:1412.7px;top:453.0px;width:72px;height:28px;background:#f37b1d;border-radius:4px;color:#fff;font-size:15px;line-height:28px;text-align:center;white-space:nowrap">重置密码</div>
<div style="position:absolute;left:1490.3px;top:453.0px;width:72px;height:28px;background:#f37b1d;border-radius:4px;color:#fff;font-size:15px;line-height:28px;text-align:center;white-space:nowrap">修改密码</div>
<div style="position:absolute;left:1567.9px;top:453.0px;width:102px;height:28px;background:#f37b1d;border-radius:4px;color:#fff;font-size:15px;line-height:28px;text-align:center;white-space:nowrap">修改资金密码</div>
<div style="position:absolute;left:1675.5px;top:453.0px;width:57px;height:28px;background:#f37b1d;border-radius:4px;color:#fff;font-size:15px;line-height:28px;text-align:center;white-space:nowrap">未实名</div>
<div style="position:absolute;left:1738.1px;top:453.0px;width:72px;height:28px;background:#5eb95e;border-radius:4px;color:#fff;font-size:15px;line-height:28px;text-align:center;white-space:nowrap">转出锁定</div>
<div style="position:absolute;left:1435.2px;top:481.5px;width:87px;height:28px;background:#dd514c;border-radius:4px;color:#fff;font-size:15px;line-height:28px;text-align:center;white-space:nowrap">解绑银行卡</div>
<div style="position:absolute;left:1527.8px;top:481.5px;width:57px;height:28px;background:#3bb4f2;border-radius:4px;color:#fff;font-size:15px;line-height:28px;text-align:center;white-space:nowrap">踢下线</div>
<div style="position:absolute;left:293px;top:551px;width:14px;height:14px;box-sizing:border-box;border:1px solid #9a9a9a;border-radius:3px;background:linear-gradient(#e8e8e8,#d6d6d6)"></div>
<div style="position:absolute;left:326px;top:548.00px;width:71px;font-size:15.5px;line-height:25px;color:#333;font-weight:normal;text-align:center;white-space:nowrap;">3</div>
<div style="position:absolute;left:397px;top:535.5px;width:94px;font-size:15.5px;line-height:25px;color:#333;text-align:center;white-space:nowrap">18888888<br>888</div>
<div style="position:absolute;left:491px;top:548.00px;width:117px;font-size:15.5px;line-height:25px;color:#333;font-weight:normal;text-align:center;white-space:nowrap;"><span style="font-size:14.6px">阿萨德</span></div>
<div style="position:absolute;left:608px;top:548.00px;width:83px;font-size:15.5px;line-height:25px;color:#333;font-weight:normal;text-align:center;white-space:nowrap;">0.00</div>
<div style="position:absolute;left:691px;top:535.5px;width:94px;font-size:15.5px;line-height:25px;color:#333;text-align:center;white-space:nowrap">18844444<br>444</div>
<div style="position:absolute;left:785px;top:548.00px;width:101px;font-size:15.5px;line-height:25px;color:#333;font-weight:normal;text-align:center;white-space:nowrap;">692811</div>
<div style="position:absolute;left:896.5px;top:549.5px;width:55px;height:22px;background:#5eb95e;border-radius:3px;color:#fff;font-size:15px;font-weight:bold;line-height:22px;text-align:center;white-space:nowrap">已实名</div>
<div style="position:absolute;left:962px;top:536.2px;width:134px;font-size:16px;line-height:25px;color:#333;text-align:center;white-space:nowrap">2021-09-30 15:<br>18:01</div>
<div style="position:absolute;left:1126.5px;top:549.5px;width:39px;height:22px;background:#5eb95e;border-radius:3px;color:#fff;font-size:15px;font-weight:bold;line-height:22px;text-align:center;white-space:nowrap">正常</div>
<div style="position:absolute;left:1241.2px;top:532.0px;width:72px;height:28px;background:#5eb95e;border-radius:4px;color:#fff;font-size:15px;line-height:28px;text-align:center;white-space:nowrap">代客建仓</div>
<div style="position:absolute;left:1318.8px;top:532.0px;width:42px;height:28px;background:#5a98de;border-radius:4px;color:#fff;font-size:15px;line-height:28px;text-align:center;white-space:nowrap">封禁</div>
<div style="position:absolute;left:1366.4px;top:532.0px;width:72px;height:28px;background:#5eb95e;border-radius:4px;color:#fff;font-size:15px;line-height:28px;text-align:center;white-space:nowrap">详细信息</div>
<div style="position:absolute;left:1444.0px;top:532.0px;width:72px;height:28px;background:#f37b1d;border-radius:4px;color:#fff;font-size:15px;line-height:28px;text-align:center;white-space:nowrap">重置密码</div>
<div style="position:absolute;left:1521.6px;top:532.0px;width:72px;height:28px;background:#f37b1d;border-radius:4px;color:#fff;font-size:15px;line-height:28px;text-align:center;white-space:nowrap">修改密码</div>
<div style="position:absolute;left:1599.2px;top:532.0px;width:102px;height:28px;background:#f37b1d;border-radius:4px;color:#fff;font-size:15px;line-height:28px;text-align:center;white-space:nowrap">修改资金密码</div>
<div style="position:absolute;left:1706.8px;top:532.0px;width:72px;height:28px;background:#f37b1d;border-radius:4px;color:#fff;font-size:15px;line-height:28px;text-align:center;white-space:nowrap">解除实名</div>
<div style="position:absolute;left:1396.4px;top:560.5px;width:72px;height:28px;background:#5eb95e;border-radius:4px;color:#fff;font-size:15px;line-height:28px;text-align:center;white-space:nowrap">转出锁定</div>
<div style="position:absolute;left:1474.0px;top:560.5px;width:87px;height:28px;background:#dd514c;border-radius:4px;color:#fff;font-size:15px;line-height:28px;text-align:center;white-space:nowrap">解绑银行卡</div>
<div style="position:absolute;left:1566.6px;top:560.5px;width:57px;height:28px;background:#3bb4f2;border-radius:4px;color:#fff;font-size:15px;line-height:28px;text-align:center;white-space:nowrap">踢下线</div>
<div style="position:absolute;left:293px;top:630px;width:14px;height:14px;box-sizing:border-box;border:1px solid #9a9a9a;border-radius:3px;background:linear-gradient(#e8e8e8,#d6d6d6)"></div>
<div style="position:absolute;left:326px;top:627.00px;width:71px;font-size:15.5px;line-height:25px;color:#333;font-weight:normal;text-align:center;white-space:nowrap;">4</div>
<div style="position:absolute;left:397px;top:614.5px;width:94px;font-size:15.5px;line-height:25px;color:#333;text-align:center;white-space:nowrap">13123123<br>123</div>
<div style="position:absolute;left:491px;top:614.5px;width:117px;font-size:15.5px;line-height:25px;color:#333;text-align:center;white-space:nowrap"><span style="font-size:14.6px">华泰</span>ETF2021<br>0104</div>
<div style="position:absolute;left:608px;top:614.5px;width:83px;font-size:15.5px;line-height:25px;color:#333;text-align:center;white-space:nowrap">977589<br>1.58</div>
<div style="position:absolute;left:691px;top:614.5px;width:94px;font-size:15.5px;line-height:25px;color:#333;text-align:center;white-space:nowrap">18844444<br>444</div>
<div style="position:absolute;left:785px;top:627.00px;width:101px;font-size:15.5px;line-height:25px;color:#333;font-weight:normal;text-align:center;white-space:nowrap;">692811</div>
<div style="position:absolute;left:896.5px;top:628.5px;width:55px;height:22px;background:#5eb95e;border-radius:3px;color:#fff;font-size:15px;font-weight:bold;line-height:22px;text-align:center;white-space:nowrap">已实名</div>
<div style="position:absolute;left:962px;top:615.2px;width:134px;font-size:16px;line-height:25px;color:#333;text-align:center;white-space:nowrap">2021-09-30 15:<br>22:09</div>
<div style="position:absolute;left:1126.5px;top:628.5px;width:39px;height:22px;background:#5eb95e;border-radius:3px;color:#fff;font-size:15px;font-weight:bold;line-height:22px;text-align:center;white-space:nowrap">正常</div>
<div style="position:absolute;left:1241.2px;top:611.0px;width:72px;height:28px;background:#5eb95e;border-radius:4px;color:#fff;font-size:15px;line-height:28px;text-align:center;white-space:nowrap">代客建仓</div>
<div style="position:absolute;left:1318.8px;top:611.0px;width:42px;height:28px;background:#5a98de;border-radius:4px;color:#fff;font-size:15px;line-height:28px;text-align:center;white-space:nowrap">封禁</div>
<div style="position:absolute;left:1366.4px;top:611.0px;width:72px;height:28px;background:#5eb95e;border-radius:4px;color:#fff;font-size:15px;line-height:28px;text-align:center;white-space:nowrap">详细信息</div>
<div style="position:absolute;left:1444.0px;top:611.0px;width:72px;height:28px;background:#f37b1d;border-radius:4px;color:#fff;font-size:15px;line-height:28px;text-align:center;white-space:nowrap">重置密码</div>
<div style="position:absolute;left:1521.6px;top:611.0px;width:72px;height:28px;background:#f37b1d;border-radius:4px;color:#fff;font-size:15px;line-height:28px;text-align:center;white-space:nowrap">修改密码</div>
<div style="position:absolute;left:1599.2px;top:611.0px;width:102px;height:28px;background:#f37b1d;border-radius:4px;color:#fff;font-size:15px;line-height:28px;text-align:center;white-space:nowrap">修改资金密码</div>
<div style="position:absolute;left:1706.8px;top:611.0px;width:72px;height:28px;background:#f37b1d;border-radius:4px;color:#fff;font-size:15px;line-height:28px;text-align:center;white-space:nowrap">解除实名</div>
<div style="position:absolute;left:1396.4px;top:639.5px;width:72px;height:28px;background:#5eb95e;border-radius:4px;color:#fff;font-size:15px;line-height:28px;text-align:center;white-space:nowrap">转出锁定</div>
<div style="position:absolute;left:1474.0px;top:639.5px;width:87px;height:28px;background:#dd514c;border-radius:4px;color:#fff;font-size:15px;line-height:28px;text-align:center;white-space:nowrap">解绑银行卡</div>
<div style="position:absolute;left:1566.6px;top:639.5px;width:57px;height:28px;background:#3bb4f2;border-radius:4px;color:#fff;font-size:15px;line-height:28px;text-align:center;white-space:nowrap">踢下线</div>
<div style="position:absolute;left:293px;top:709px;width:14px;height:14px;box-sizing:border-box;border:1px solid #9a9a9a;border-radius:3px;background:linear-gradient(#e8e8e8,#d6d6d6)"></div>
<div style="position:absolute;left:326px;top:706.00px;width:71px;font-size:15.5px;line-height:25px;color:#333;font-weight:normal;text-align:center;white-space:nowrap;">6</div>
<div style="position:absolute;left:397px;top:693.5px;width:94px;font-size:15.5px;line-height:25px;color:#333;text-align:center;white-space:nowrap">13040861<br>805</div>
<div style="position:absolute;left:608px;top:706.00px;width:83px;font-size:15.5px;line-height:25px;color:#333;font-weight:normal;text-align:center;white-space:nowrap;">0.00</div>
<div style="position:absolute;left:691px;top:693.5px;width:94px;font-size:15.5px;line-height:25px;color:#333;text-align:center;white-space:nowrap">18844444<br>444</div>
<div style="position:absolute;left:785px;top:706.00px;width:101px;font-size:15.5px;line-height:25px;color:#333;font-weight:normal;text-align:center;white-space:nowrap;">692811</div>
<div style="position:absolute;left:896.5px;top:707.5px;width:55px;height:22px;background:#dd514c;border-radius:3px;color:#fff;font-size:15px;font-weight:bold;line-height:22px;text-align:center;white-space:nowrap">未实名</div>
<div style="position:absolute;left:962px;top:694.2px;width:134px;font-size:16px;line-height:25px;color:#333;text-align:center;white-space:nowrap">2021-10-09 16:<br>15:34</div>
<div style="position:absolute;left:1126.5px;top:707.5px;width:39px;height:22px;background:#5eb95e;border-radius:3px;color:#fff;font-size:15px;font-weight:bold;line-height:22px;text-align:center;white-space:nowrap">正常</div>
<div style="position:absolute;left:1209.9px;top:690.0px;width:72px;height:28px;background:#5eb95e;border-radius:4px;color:#fff;font-size:15px;line-height:28px;text-align:center;white-space:nowrap">代客建仓</div>
<div style="position:absolute;left:1287.5px;top:690.0px;width:42px;height:28px;background:#5a98de;border-radius:4px;color:#fff;font-size:15px;line-height:28px;text-align:center;white-space:nowrap">封禁</div>
<div style="position:absolute;left:1335.1px;top:690.0px;width:72px;height:28px;background:#5eb95e;border-radius:4px;color:#fff;font-size:15px;line-height:28px;text-align:center;white-space:nowrap">详细信息</div>
<div style="position:absolute;left:1412.7px;top:690.0px;width:72px;height:28px;background:#f37b1d;border-radius:4px;color:#fff;font-size:15px;line-height:28px;text-align:center;white-space:nowrap">重置密码</div>
<div style="position:absolute;left:1490.3px;top:690.0px;width:72px;height:28px;background:#f37b1d;border-radius:4px;color:#fff;font-size:15px;line-height:28px;text-align:center;white-space:nowrap">修改密码</div>
<div style="position:absolute;left:1567.9px;top:690.0px;width:102px;height:28px;background:#f37b1d;border-radius:4px;color:#fff;font-size:15px;line-height:28px;text-align:center;white-space:nowrap">修改资金密码</div>
<div style="position:absolute;left:1675.5px;top:690.0px;width:57px;height:28px;background:#f37b1d;border-radius:4px;color:#fff;font-size:15px;line-height:28px;text-align:center;white-space:nowrap">未实名</div>
<div style="position:absolute;left:1738.1px;top:690.0px;width:72px;height:28px;background:#5eb95e;border-radius:4px;color:#fff;font-size:15px;line-height:28px;text-align:center;white-space:nowrap">转出锁定</div>
<div style="position:absolute;left:1435.2px;top:718.5px;width:87px;height:28px;background:#dd514c;border-radius:4px;color:#fff;font-size:15px;line-height:28px;text-align:center;white-space:nowrap">解绑银行卡</div>
<div style="position:absolute;left:1527.8px;top:718.5px;width:57px;height:28px;background:#3bb4f2;border-radius:4px;color:#fff;font-size:15px;line-height:28px;text-align:center;white-space:nowrap">踢下线</div>
<div style="position:absolute;left:293px;top:788px;width:14px;height:14px;box-sizing:border-box;border:1px solid #9a9a9a;border-radius:3px;background:linear-gradient(#e8e8e8,#d6d6d6)"></div>
<div style="position:absolute;left:326px;top:785.00px;width:71px;font-size:15.5px;line-height:25px;color:#333;font-weight:normal;text-align:center;white-space:nowrap;">7</div>
<div style="position:absolute;left:397px;top:772.5px;width:94px;font-size:15.5px;line-height:25px;color:#333;text-align:center;white-space:nowrap">18750506<br>666</div>
<div style="position:absolute;left:491px;top:785.00px;width:117px;font-size:15.5px;line-height:25px;color:#333;font-weight:normal;text-align:center;white-space:nowrap;"><span style="font-size:14.6px">李思思</span></div>
<div style="position:absolute;left:608px;top:785.00px;width:83px;font-size:15.5px;line-height:25px;color:#333;font-weight:normal;text-align:center;white-space:nowrap;">0.00</div>
<div style="position:absolute;left:691px;top:772.5px;width:94px;font-size:15.5px;line-height:25px;color:#333;text-align:center;white-space:nowrap">18844444<br>444</div>
<div style="position:absolute;left:785px;top:785.00px;width:101px;font-size:15.5px;line-height:25px;color:#333;font-weight:normal;text-align:center;white-space:nowrap;">692811</div>
<div style="position:absolute;left:896.5px;top:786.5px;width:55px;height:22px;background:#5eb95e;border-radius:3px;color:#fff;font-size:15px;font-weight:bold;line-height:22px;text-align:center;white-space:nowrap">已实名</div>
<div style="position:absolute;left:962px;top:773.2px;width:134px;font-size:16px;line-height:25px;color:#333;text-align:center;white-space:nowrap">2021-10-10 12:<br>47:13</div>
<div style="position:absolute;left:1126.5px;top:786.5px;width:39px;height:22px;background:#5eb95e;border-radius:3px;color:#fff;font-size:15px;font-weight:bold;line-height:22px;text-align:center;white-space:nowrap">正常</div>
<div style="position:absolute;left:1241.2px;top:769.0px;width:72px;height:28px;background:#5eb95e;border-radius:4px;color:#fff;font-size:15px;line-height:28px;text-align:center;white-space:nowrap">代客建仓</div>
<div style="position:absolute;left:1318.8px;top:769.0px;width:42px;height:28px;background:#5a98de;border-radius:4px;color:#fff;font-size:15px;line-height:28px;text-align:center;white-space:nowrap">封禁</div>
<div style="position:absolute;left:1366.4px;top:769.0px;width:72px;height:28px;background:#5eb95e;border-radius:4px;color:#fff;font-size:15px;line-height:28px;text-align:center;white-space:nowrap">详细信息</div>
<div style="position:absolute;left:1444.0px;top:769.0px;width:72px;height:28px;background:#f37b1d;border-radius:4px;color:#fff;font-size:15px;line-height:28px;text-align:center;white-space:nowrap">重置密码</div>
<div style="position:absolute;left:1521.6px;top:769.0px;width:72px;height:28px;background:#f37b1d;border-radius:4px;color:#fff;font-size:15px;line-height:28px;text-align:center;white-space:nowrap">修改密码</div>
<div style="position:absolute;left:1599.2px;top:769.0px;width:102px;height:28px;background:#f37b1d;border-radius:4px;color:#fff;font-size:15px;line-height:28px;text-align:center;white-space:nowrap">修改资金密码</div>
<div style="position:absolute;left:1706.8px;top:769.0px;width:72px;height:28px;background:#f37b1d;border-radius:4px;color:#fff;font-size:15px;line-height:28px;text-align:center;white-space:nowrap">解除实名</div>
<div style="position:absolute;left:1396.4px;top:797.5px;width:72px;height:28px;background:#5eb95e;border-radius:4px;color:#fff;font-size:15px;line-height:28px;text-align:center;white-space:nowrap">转出锁定</div>
<div style="position:absolute;left:1474.0px;top:797.5px;width:87px;height:28px;background:#dd514c;border-radius:4px;color:#fff;font-size:15px;line-height:28px;text-align:center;white-space:nowrap">解绑银行卡</div>
<div style="position:absolute;left:1566.6px;top:797.5px;width:57px;height:28px;background:#3bb4f2;border-radius:4px;color:#fff;font-size:15px;line-height:28px;text-align:center;white-space:nowrap">踢下线</div>
<div style="position:absolute;left:293px;top:867px;width:14px;height:14px;box-sizing:border-box;border:1px solid #9a9a9a;border-radius:3px;background:linear-gradient(#e8e8e8,#d6d6d6)"></div>
<div style="position:absolute;left:326px;top:864.00px;width:71px;font-size:15.5px;line-height:25px;color:#333;font-weight:normal;text-align:center;white-space:nowrap;">8</div>
<div style="position:absolute;left:397px;top:851.5px;width:94px;font-size:15.5px;line-height:25px;color:#333;text-align:center;white-space:nowrap">15546464<br>646</div>
<div style="position:absolute;left:608px;top:864.00px;width:83px;font-size:15.5px;line-height:25px;color:#333;font-weight:normal;text-align:center;white-space:nowrap;">0.00</div>
<div style="position:absolute;left:691px;top:851.5px;width:94px;font-size:15.5px;line-height:25px;color:#333;text-align:center;white-space:nowrap">18950506<br>666</div>
<div style="position:absolute;left:785px;top:864.00px;width:101px;font-size:15.5px;line-height:25px;color:#333;font-weight:normal;text-align:center;white-space:nowrap;">153642</div>
<div style="position:absolute;left:896.5px;top:865.5px;width:55px;height:22px;background:#dd514c;border-radius:3px;color:#fff;font-size:15px;font-weight:bold;line-height:22px;text-align:center;white-space:nowrap">未实名</div>
<div style="position:absolute;left:962px;top:852.2px;width:134px;font-size:16px;line-height:25px;color:#333;text-align:center;white-space:nowrap">2021-10-10 12:<br>55:08</div>
<div style="position:absolute;left:1126.5px;top:865.5px;width:39px;height:22px;background:#5eb95e;border-radius:3px;color:#fff;font-size:15px;font-weight:bold;line-height:22px;text-align:center;white-space:nowrap">正常</div>
<div style="position:absolute;left:1209.9px;top:848.0px;width:72px;height:28px;background:#5eb95e;border-radius:4px;color:#fff;font-size:15px;line-height:28px;text-align:center;white-space:nowrap">代客建仓</div>
<div style="position:absolute;left:1287.5px;top:848.0px;width:42px;height:28px;background:#5a98de;border-radius:4px;color:#fff;font-size:15px;line-height:28px;text-align:center;white-space:nowrap">封禁</div>
<div style="position:absolute;left:1335.1px;top:848.0px;width:72px;height:28px;background:#5eb95e;border-radius:4px;color:#fff;font-size:15px;line-height:28px;text-align:center;white-space:nowrap">详细信息</div>
<div style="position:absolute;left:1412.7px;top:848.0px;width:72px;height:28px;background:#f37b1d;border-radius:4px;color:#fff;font-size:15px;line-height:28px;text-align:center;white-space:nowrap">重置密码</div>
<div style="position:absolute;left:1490.3px;top:848.0px;width:72px;height:28px;background:#f37b1d;border-radius:4px;color:#fff;font-size:15px;line-height:28px;text-align:center;white-space:nowrap">修改密码</div>
<div style="position:absolute;left:1567.9px;top:848.0px;width:102px;height:28px;background:#f37b1d;border-radius:4px;color:#fff;font-size:15px;line-height:28px;text-align:center;white-space:nowrap">修改资金密码</div>
<div style="position:absolute;left:1675.5px;top:848.0px;width:57px;height:28px;background:#f37b1d;border-radius:4px;color:#fff;font-size:15px;line-height:28px;text-align:center;white-space:nowrap">未实名</div>
<div style="position:absolute;left:1738.1px;top:848.0px;width:72px;height:28px;background:#5eb95e;border-radius:4px;color:#fff;font-size:15px;line-height:28px;text-align:center;white-space:nowrap">转出锁定</div>
<div style="position:absolute;left:1435.2px;top:876.5px;width:87px;height:28px;background:#dd514c;border-radius:4px;color:#fff;font-size:15px;line-height:28px;text-align:center;white-space:nowrap">解绑银行卡</div>
<div style="position:absolute;left:1527.8px;top:876.5px;width:57px;height:28px;background:#3bb4f2;border-radius:4px;color:#fff;font-size:15px;line-height:28px;text-align:center;white-space:nowrap">踢下线</div>
</body></html>
